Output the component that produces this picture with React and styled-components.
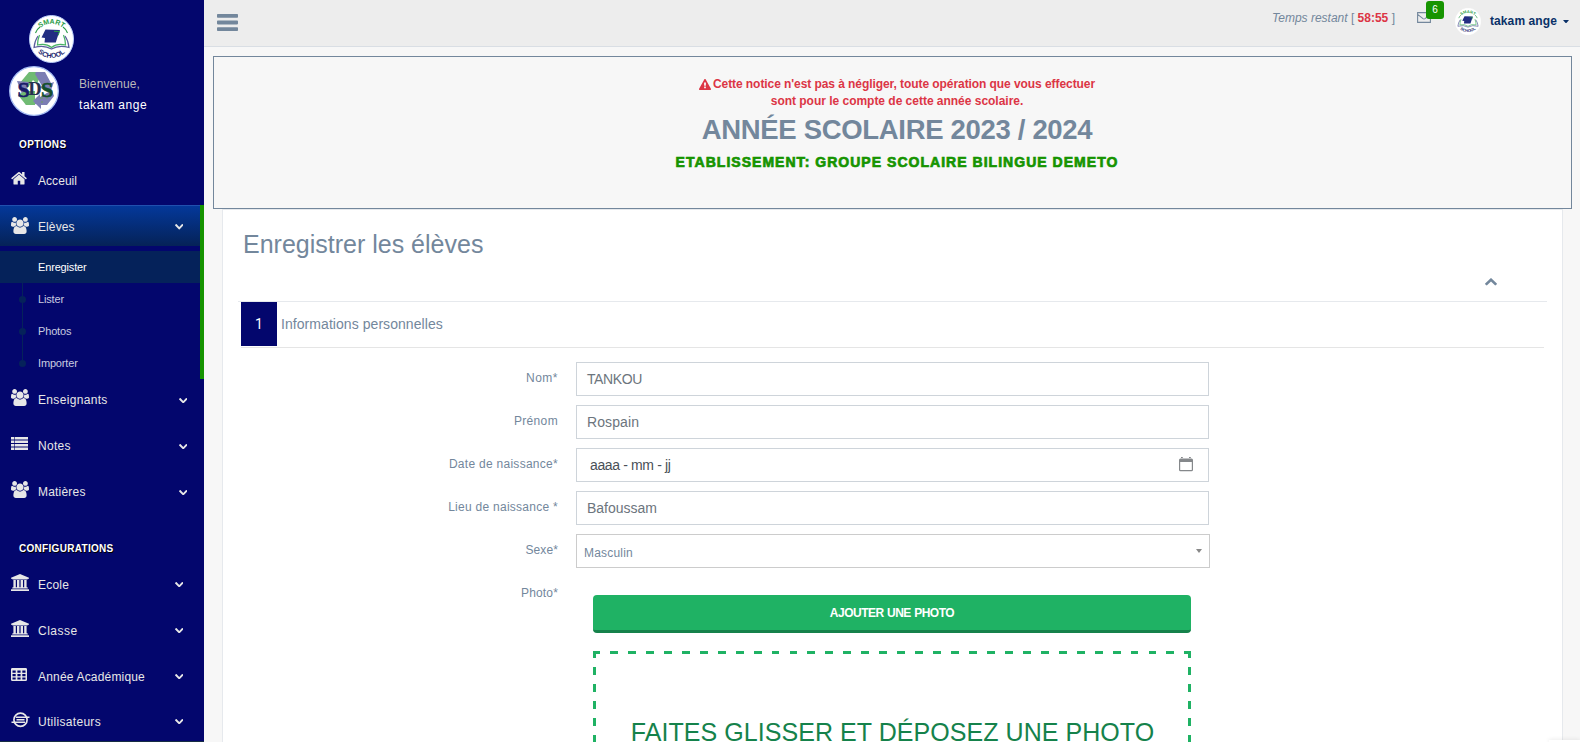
import React from "react";
import styled, { createGlobalStyle, css } from "styled-components";

const slate = "#73879c";
const navy = "#03066d";
const green = "#169400";

const Global = createGlobalStyle`
  * { box-sizing: border-box; }
  body {
    margin: 0;
    background: #f7f7f7;
    color: ${slate};
    font: 12px/18px "Liberation Sans", Arial, sans-serif;
    overflow: hidden;
  }
  h1, h2, h3, p, ul { margin: 0; padding: 0; list-style: none; font-weight: 400; }
`;

const Page = styled.div`
  position: relative;
  display: flex;
  height: 742px;
  overflow: hidden;
`;

/* ---------- icons ---------- */
const Glyph = styled.svg`
  display: block;
  flex: none;
  fill: currentColor;
`;

const paths = {
  home: {
    box: "0 253 1664 1283",
    d: "M1408 992v480q0 26-19 45t-45 19h-384v-384h-256v384h-384q-26 0-45-19t-19-45v-480q0-1 .5-3t.5-3l575-474 575 474q1 2 1 6zm223-69l-62 74q-8 9-21 11h-3q-13 0-21-7l-692-577-692 577q-12 8-24 7-13-2-21-11l-62-74q-8-10-7-23.5t11-21.5l719-599q32-26 76-26t76 26l244 204v-195q0-14 9-23t23-9h192q14 0 23 9t9 23v408l219 182q10 8 11 21.5t-7 23.5z",
  },
  users: {
    box: "-64 0 1920 1792",
    d: "M529 896q-162 5-265 128h-134q-82 0-138-40.5t-56-118.5q0-353 124-353 6 0 43.5 21t97.5 42.5 119 21.5q67 0 133-23-5 37-5 66 0 139 81 256zm1071 637q0 120-73 189.5t-194 69.5h-874q-121 0-194-69.5t-73-189.5q0-53 3.5-103.5t14-109 26.5-108.5 43-97.5 62-81 85.5-53.5 111.5-20q10 0 43 21.5t73 48 107 48 135 21.5 135-21.5 107-48 73-48 43-21.5q61 0 111.5 20t85.5 53.5 62 81 43 97.5 26.5 108.5 14 109 3.5 103.5zm-1024-1277q0 106-75 181t-181 75-181-75-75-181 75-181 181-75 181 75 75 181zm704 384q0 159-112.5 271.5t-271.5 112.5-271.5-112.5-112.5-271.5 112.5-271.5 271.5-112.5 271.5 112.5 112.5 271.5zm576 225q0 78-56 118.5t-138 40.5h-134q-103-123-265-128 81-117 81-256 0-29-5-66 66 23 133 23 59 0 119-21.5t97.5-42.5 43.5-21q124 0 124 353zm-128-609q0 106-75 181t-181 75-181-75-75-181 75-181 181-75 181 75 75 181z",
  },
  list: {
    box: "0 0 17 13",
    d: "M0 0h3v2.6H0zM3.600 0h13.400v2.6H3.600zM0 3.5h3v2.6H0zM3.600 3.5h13.400v2.6H3.600zM0 7h3v2.6H0zM3.600 7h13.400v2.6H3.600zM0 10.4h3V13H0zM3.600 10.4h13.400V13H3.600z",
  },
  bank: {
    box: "-128 0 1920 1792",
    d: "M832 0l960 384v128h-128q0 26-20.500 45t-48.500 19h-1526q-28 0-48.500-19t-20.500-45h-128v-128zM128 640h256v768h128v-768h256v768h128v-768h256v768h128v-768h256v768h59q28 0 48.500 19t20.500 45v64h-1664v-64q0-26 20.500-45t48.500-19h59v-768zM1723 1600q28 0 48.500 19t20.500 45v128h-1920v-128q0-26 20.500-45t48.500-19h1782z",
  },
  table: {
    box: "0 0 15 13",
    d: "M1.300 0h12.400Q15 0 15 1.300v10.400Q15 13 13.700 13H1.300Q0 13 0 11.700V1.300Q0 0 1.300 0zM1.400 2.400v2.400h3V2.400zM6 2.400v2.400h3V2.400zM10.600 2.400v2.400h3V2.400zM1.400 6v2.200h3V6zM6 6v2.200h3V6zM10.600 6v2.200h3V6zM1.400 9.400v2.200h3V9.400zM6 9.400v2.200h3V9.400zM10.600 9.400v2.200h3V9.400z",
  },
  down: {
    box: "90 533 1612 1035",
    d: "M1683 808l-742 741q-19 19-45 19t-45-19l-742-741q-19-19-19-45.500t19-45.500l166-165q19-19 45-19t45 19l531 531 531-531q19-19 45-19t45 19l166 165q19 19 19 45.500t-19 45.500z",
  },
  up: {
    box: "90 480 1612 1035",
    d: "M1683 1331l-166 165q-19 19-45 19t-45-19l-531-531-531 531q-19 19-45 19t-45-19l-166-165q-19-19-19-45.500t19-45.500l742-741q19-19 45-19t45 19l742 741q19 19 19 45.500t-19 45.500z",
  },
  warning: {
    box: "0 0 1792 1664",
    d: "M1024 1375v-190q0-14-9.500-23.500t-22.500-9.500h-192q-13 0-22.500 9.500t-9.500 23.500v190q0 14 9.500 23.500t22.500 9.500h192q13 0 22.500-9.500t9.500-23.500zm-2-374l18-459q0-12-10-19-13-11-24-11h-220q-11 0-24 11-10 7-10 21l17 457q0 10 10 16.500t24 6.500h185q14 0 23.500-6.500t10.500-16.500zm-14-934l768 1408q35 63-2 126-17 29-46.500 46t-63.500 17h-1536q-34 0-63.500-17t-46.500-46q-37-63-2-126l768-1408q17-31 47-49t65-18 65 18 47 49z",
  },
  bars: {
    box: "0 0 21 17",
    d: "M.8 0h19.400q.8 0 .8.800v2.200q0 .8-.8.800H.8Q0 3.800 0 3V.8Q0 0 .8 0zM.8 6.600h19.400q.8 0 .8.800v2.200q0 .8-.8.800H.8q-.8 0-.8-.8V7.400q0-.8.800-.8zM.8 13.200h19.400q.8 0 .8.800v2.200q0 .8-.8.800H.8q-.8 0-.8-.8V14q0-.8.800-.8z",
  },
  caret: { box: "0 0 8 4", d: "M0 0h8L4 4z" },
};

const Icon = ({ name, w, h }) => (
  <Glyph viewBox={paths[name].box} width={w} height={h} preserveAspectRatio="none">
    <path fillRule="evenodd" d={paths[name].d} />
  </Glyph>
);

const RingIcon = () => (
  <Glyph width="19" height="16" viewBox="0 0 19 16">
    <g fill="none" stroke="currentColor">
      <circle cx="9.500" cy="7.700" r="6.600" strokeWidth="1.700" />
      <path d="M4.800 5.300H18.500M5.500 7.700H13.500M.5 10.200H14" strokeWidth="1.400" />
    </g>
  </Glyph>
);

const Envelope = () => (
  <Glyph width="14" height="11" viewBox="0 0 14 11">
    <path d="M.6.600h12.800v9.800H.6zM.6 2.400L6 6.600q1 .7 2 0l5.400-4.200" fill="none" stroke="currentColor" strokeWidth="1.100" />
  </Glyph>
);

const Calendar = () => (
  <Glyph width="14" height="15" viewBox="0 0 14 15">
    <path d="M0 3Q0 1.500 1.500 1.500h11Q14 1.500 14 3v9.700q0 1.500-1.500 1.500h-11Q0 14.200 0 12.700zM1.200 5v7.500q0 .5.500.5h10.600q.5 0 .5-.5V5zM2 0h1.800v2H2zM10 0h1.800v2H10z" fillRule="evenodd" />
  </Glyph>
);

const SmartLogo = ({ id, w, h, ring }) => (
  <Glyph width={w} height={h} viewBox="0 0 45 48" preserveAspectRatio="none">
    <defs>
      <path id={`${id}t`} d="M6 20.500A17.500 17.500 0 0 1 39 20.500" />
      <path id={`${id}b`} d="M4 30.500A20 20 0 0 0 41 30.500" />
    </defs>
    <ellipse cx="22.500" cy="24" rx="22" ry="23.500" fill="#fff" stroke={ring} />
    <g fontFamily="Liberation Sans, sans-serif" fontWeight="700" fontSize="7" textAnchor="middle">
      <text fill="#2b9c48"><textPath href={`#${id}t`} startOffset="50%">SMART</textPath></text>
      <text fill="#24286f"><textPath href={`#${id}b`} startOffset="50%">SCHOOL</textPath></text>
    </g>
    <g fill="none">
      <path d="M6.500 18Q8 14 11 12M38.500 18Q37 14 34 12" stroke="#2b9c48" strokeWidth="1.100" />
      <path d="M9 21Q5.500 26 5 32.500Q15 29.500 22.500 34Q30 29.500 40 32.500Q39.500 26 36 21" stroke="#5a5f9c" strokeWidth="1.200" />
      <path d="M10.500 20Q8.500 25 8.500 30Q17 28 22.500 32.500Q28 28 36.500 30Q36.500 25 34.500 20" stroke="#49b265" strokeWidth="1.200" />
    </g>
    <path d="M16.500 14.500L31 15L28 23.500L26.800 27.500H15.500L16 23L12.500 22.500z" fill="#232d82" />
    <path d="M25 16.300l5.500.2-1.500 4" fill="none" stroke="#2b9c48" strokeWidth="1" />
  </Glyph>
);

const SdsLogo = () => (
  <Glyph width="50" height="50" viewBox="0 0 50 50">
    <circle cx="25" cy="25" r="24.300" fill="#fff" stroke="#a9c0f5" strokeWidth="1.300" />
    <path d="M20 6h13l-5 12-4-4-6 9-8-5z" fill="#70bb73" />
    <path d="M27 6h9l6 11 3-1-4 11-11-6 3-1-7-12z" fill="#7c7eb3" />
    <path d="M8 15l12 1-4 13 12 9-11 1z" fill="#7c7eb3" />
    <path d="M16 25h10v14H17L9 29z" fill="#70bb73" />
    <path d="M43 24l2 6-7 9h-6v4l-8-8 7-7v3z" fill="#7c7eb3" />
    <path d="M31 32h3M37 32h2M32 36h2" stroke="#6aa05e" strokeWidth="1.200" />
    <g fontFamily="Liberation Serif, serif" fontWeight="700" fontSize="22" strokeWidth=".6">
      <text x="8.500" y="30.500" fill="#171b67" stroke="#171b67">S</text>
      <text x="19.500" y="29" fill="#26304f" stroke="#26304f" strokeWidth=".2" fontSize="18">D</text>
      <text x="32" y="30.500" fill="#144f2c" stroke="#144f2c">S</text>
    </g>
  </Glyph>
);

/* ---------- sidebar ---------- */
const Sidebar = styled.aside`
  width: 204px;
  height: 742px;
  flex: none;
  background: ${navy};
  color: #e7e7e7;
  border-bottom: 1px solid #172d44;
  overflow: hidden;
`;
const Brand = styled.div`
  padding: 15px 0 0 29px;
  height: 66px;
`;
const Profile = styled.div`
  display: flex;
  height: 50px;
  padding-left: 9px;
`;
const Greeting = styled.div`
  padding: 8px 0 0 20px;
  line-height: 21px;
`;
const Welcome = styled.div`
  color: #bab8b8;
  letter-spacing: 0.1px;
`;
const UserName = styled.div`
  color: #fff;
  letter-spacing: 0.55px;
`;
const Section = styled.h3`
  height: ${(p) => p.$h}px;
  padding: ${(p) => p.$top}px 0 0 19px;
  color: #fff;
  font-size: 10px;
  font-weight: 700;
  line-height: 14px;
  letter-spacing: ${(p) => p.$ls}px;
  text-shadow: 1px 1px #000;
`;
const NavLink = styled.div`
  display: flex;
  align-items: center;
  height: 41px;
  margin-top: ${(p) => (p.$tight ? -1 : 0)}px;
  margin-bottom: 5px;
  padding-left: 11px;
  padding-right: ${(p) => (p.$inset ? 21 : 17)}px;
  ${(p) =>
    p.$active &&
    css`
      background: linear-gradient(#04389a, #052257);
      border-top: 1px solid #2050ae;
    `}
`;
const NavIcon = styled.span`
  width: 27px;
  flex: none;
  padding-bottom: 2px;
`;
const NavText = styled.span`
  flex: 1;
  padding-top: 2px;
  letter-spacing: ${(p) => p.$ls}px;
`;
const Arrow = styled.span`
  padding-top: ${(p) => (p.$low ? 4 : 2)}px;
`;
const Group = styled.div`
  border-right: 4px solid ${green};
  margin-bottom: -1px;
`;
const SubRow = styled.div`
  display: flex;
  align-items: center;
  height: 32px;
  font-size: 11px;
  letter-spacing: -0.16px;
  color: ${(p) => (p.$current ? "#fff" : "#c9cbe0")};
  background: ${(p) => (p.$current ? "#05225a" : "none")};
`;
const Rail = styled.span`
  display: flex;
  align-items: center;
  justify-content: center;
  align-self: stretch;
  width: 7px;
  margin: 0 12px 0 19px;
  visibility: ${(p) => (p.$hidden ? "hidden" : "visible")};
  background: linear-gradient(#05225a, #05225a) center top / 1px ${(p) => (p.$last ? "50%" : "100%")} no-repeat;
  &::before {
    content: "";
    width: 7px;
    height: 7px;
    border-radius: 50%;
    background: #05225a;
  }
`;

const NavRow = ({ icon, iw, ih, label, ls = 0.2, inset, active, low, tight, arrow = true }) => (
  <NavLink $inset={inset} $active={active} $tight={tight}>
    <NavIcon>{icon === "ring" ? <RingIcon /> : <Icon name={icon} w={iw} h={ih} />}</NavIcon>
    <NavText $ls={ls}>{label}</NavText>
    {arrow && <Arrow $low={low}><Icon name="down" w={8.500} h={5.500} /></Arrow>}
  </NavLink>
);

/* ---------- top bar ---------- */
const Main = styled.main`
  flex: 1;
  min-width: 0;
`;
const TopBar = styled.header`
  display: flex;
  align-items: flex-start;
  height: 47px;
  padding: 14px 11px 0 13px;
  background: #ededed;
  border-bottom: 1px solid #d9dee4;
`;
const Timer = styled.div`
  margin: -5px 22px 0 auto;
  b { color: #dc3545; }
`;
const Mail = styled.div`
  position: relative;
  margin: -2px 14px 0 0;
  width: 24px;
`;
const Badge = styled.span`
  position: absolute;
  left: 9px;
  top: -11px;
  width: 18px;
  height: 18px;
  border-radius: 3px;
  background: ${green};
  color: #fff;
  font-size: 10px;
  line-height: 17px;
  text-align: center;
`;
const Account = styled.div`
  display: flex;
  align-items: center;
  gap: 9px;
  margin-top: -6px;
  color: #0a3168;
  font-weight: 700;
`;
const AccountName = styled.span`
  margin-right: -3px;
  padding-bottom: 1px;
  letter-spacing: 0.1px;
`;

/* ---------- content ---------- */
const Notice = styled.section`
  margin: 9px 8px 0 9px;
  height: 153px;
  padding: 19px 0 0 9px;
  border: 1px solid ${slate};
  text-align: center;
`;
const Alert = styled.p`
  display: flex;
  flex-direction: column;
  align-items: center;
  color: #dc3545;
  font-weight: 700;
  line-height: 17px;
`;
const AlertLine = styled.span`
  display: flex;
  align-items: center;
  gap: 2px;
  letter-spacing: ${(p) => p.$ls}px;
`;
const Year = styled.h1`
  margin-top: 4px;
  font-size: 27.5px;
  line-height: 32px;
  font-weight: 700;
  letter-spacing: -0.32px;
`;
const School = styled.p`
  margin-top: 7px;
  color: ${green};
  font-size: 14px;
  line-height: 18px;
  font-weight: 700;
  letter-spacing: 1.03px;
  -webkit-text-stroke: 0.7px ${green};
`;
const Card = styled.section`
  margin: 0 17px 0 18px;
  height: 620px;
  padding: 19px 15px 0;
  background: #fff;
  border: 1px solid #e6e9ed;
`;
const Title = styled.h2`
  height: 49px;
  padding-left: 5px;
  font-size: 25px;
  line-height: 30px;
`;
const Tools = styled.div`
  display: flex;
  justify-content: flex-end;
  height: 23px;
  padding-right: 50px;
`;
const StepWrap = styled.div`
  border-top: 1px solid #e6e9ed;
  padding: 0 3px;
`;
const Step = styled.div`
  display: flex;
  align-items: flex-start;
  height: 46px;
  border-bottom: 1px solid #e5e5e5;
  font-size: 14px;
  line-height: 45px;
  letter-spacing: 0.06px;
`;
const StepNumber = styled.span`
  width: 36px;
  height: 44px;
  margin-right: 4px;
  background: ${navy};
  color: #fff;
  font: 14px/44px Roboto, sans-serif;
  text-align: center;
`;
const Form = styled.div`
  display: grid;
  grid-template-columns: 317px 634px;
  column-gap: 18px;
  row-gap: 9px;
  padding-top: 14px;
`;
const Label = styled.label`
  padding-top: 7px;
  text-align: right;
  letter-spacing: ${(p) => p.$ls}px;
`;
const Field = styled.div`
  display: flex;
  align-items: center;
  justify-content: space-between;
  width: 633px;
  height: 34px;
  padding: 0 ${(p) => (p.$date ? 15 : 10)}px 0 ${(p) => (p.$date ? 13 : 10)}px;
  border: 1px solid #ced4da;
  background: #fff;
  color: ${(p) => (p.$date ? "#495057" : "#6c757d")};
  font-size: 14px;
  letter-spacing: ${(p) => p.$ls || 0}px;
  svg { color: #85888b; margin-top: -1px; }
`;
const Select = styled.div`
  display: flex;
  align-items: center;
  justify-content: space-between;
  height: 34px;
  padding: 3px 7px 0 7px;
  border: 1px solid #ccc;
  letter-spacing: 0.2px;
  svg { color: #888; margin-top: -3px; }
`;
const Upload = styled.div`
  padding: 18px 18px 0 17px;
`;
const AddButton = styled.button`
  display: block;
  width: 598px;
  height: 38px;
  padding: 0;
  border: 0;
  border-bottom: 3px solid #15824b;
  border-radius: 4px;
  background: #1fb264;
  color: #fff;
  font: 700 12px/34px "Liberation Sans", Arial, sans-serif;
  letter-spacing: -0.5px;
  word-spacing: 0.5px;
`;
const dash = "#1fb264";
const hDash = `repeating-linear-gradient(90deg, transparent 0 10px, ${dash} 10px 17.950px)`;
const vDash = `repeating-linear-gradient(180deg, transparent 0 9px, ${dash} 9px 17px)`;
const DropZone = styled.div`
  width: 598px;
  height: 230px;
  margin-top: 18px;
  padding: 64px 0 0 1px;
  background:
    linear-gradient(${dash}, ${dash}) left top / 7px 3px no-repeat,
    linear-gradient(${dash}, ${dash}) right top / 7px 3px no-repeat,
    linear-gradient(${dash}, ${dash}) left top / 3px 7px no-repeat,
    linear-gradient(${dash}, ${dash}) right top / 3px 7px no-repeat,
    ${hDash} 7px 0 / 584px 3px no-repeat,
    ${vDash} 0 7px / 3px 220px no-repeat,
    ${vDash} 595px 7px / 3px 220px no-repeat;
  color: #15824b;
  font-size: 25px;
  line-height: 34px;
  letter-spacing: 0.06px;
  text-align: center;
  white-space: nowrap;
`;
const CornerPanel = styled.div`
  position: absolute;
  right: 0;
  bottom: 0;
  width: 31px;
  height: 2px;
  background: #fff;
  box-shadow: 0 0 4px rgba(0, 0, 0, 0.15);
`;

export default function App() {
  return (
    <>
      <Global />
      <Page>
        <Sidebar>
          <Brand><SmartLogo id="brand" w={45} h={48} ring="#b9ccf8" /></Brand>
          <Profile>
            <SdsLogo />
            <Greeting>
              <Welcome>Bienvenue,</Welcome>
              <UserName>takam ange</UserName>
            </Greeting>
          </Profile>
          <Section $h={43} $top={22} $ls={0.35}>OPTIONS</Section>
          <NavRow icon="home" iw={16} ih={12.500} label="Acceuil" ls={0.05} arrow={false} />
          <Group>
            <NavRow icon="users" iw={18} ih={17} label="Elèves" active ls={0.1} />
            <SubRow $current><Rail $hidden />Enregister</SubRow>
            <SubRow><Rail />Lister</SubRow>
            <SubRow><Rail />Photos</SubRow>
            <SubRow><Rail $last />Importer</SubRow>
          </Group>
          <NavRow icon="users" iw={18} ih={17} label="Enseignants" ls={0.33} low />
          <NavRow icon="list" iw={17} ih={13} label="Notes" ls={0.3} low />
          <NavRow icon="users" iw={18} ih={17} label="Matières" ls={0.2} low />
          <Section $h={47} $top={26} $ls={0.3}>CONFIGURATIONS</Section>
          <NavRow icon="bank" iw={18} ih={17} label="Ecole" inset />
          <NavRow icon="bank" iw={18} ih={17} label="Classe" inset ls={0.5} />
          <NavRow icon="table" iw={16} ih={13} label="Année Académique" inset ls={0.18} />
          <NavRow icon="ring" label="Utilisateurs" inset ls={0.3} tight />
        </Sidebar>
        <Main>
          <TopBar>
            <Icon name="bars" w={21} h={17} />
            <Timer><i>Temps restant</i> [ <b>58:55</b> ]</Timer>
            <Mail><Envelope /><Badge>6</Badge></Mail>
            <Account>
              <SmartLogo id="avatar" w={26} h={27} ring="#fff" />
              <AccountName>takam ange</AccountName>
              <Icon name="caret" w={6} h={3.500} />
            </Account>
          </TopBar>
          <Notice>
            <Alert>
              <AlertLine $ls={-0.07}><Icon name="warning" w={12} h={11} />Cette notice n'est pas à négliger, toute opération que vous effectuer</AlertLine>
              <AlertLine $ls={-0.02}>sont pour le compte de cette année scolaire.</AlertLine>
            </Alert>
            <Year>ANNÉE SCOLAIRE 2023 / 2024</Year>
            <School>ETABLISSEMENT: GROUPE SCOLAIRE BILINGUE DEMETO</School>
          </Notice>
          <Card>
            <Title>Enregistrer les élèves</Title>
            <Tools><Icon name="up" w={12} h={7.500} /></Tools>
            <StepWrap>
              <Step><StepNumber>1</StepNumber>Informations personnelles</Step>
              <Form>
                <Label $ls={0.5}>Nom*</Label><Field $ls={-0.4}>TANKOU</Field>
                <Label $ls={0.35}>Prénom</Label><Field $ls={0.1}>Rospain</Field>
                <Label $ls={0.28}>Date de naissance*</Label><Field $date $ls={-0.36}>aaaa - mm - jj<Calendar /></Field>
                <Label $ls={0.27}>Lieu de naissance *</Label><Field>Bafoussam</Field>
                <Label $ls={0.1}>Sexe*</Label><Select>Masculin<Icon name="caret" w={6} h={4} /></Select>
                <Label $ls={0.15}>Photo*</Label>
                <Upload>
                  <AddButton>AJOUTER UNE PHOTO</AddButton>
                  <DropZone>FAITES GLISSER ET DÉPOSEZ UNE PHOTO</DropZone>
                </Upload>
              </Form>
            </StepWrap>
          </Card>
        </Main>
        <CornerPanel />
      </Page>
    </>
  );
}
